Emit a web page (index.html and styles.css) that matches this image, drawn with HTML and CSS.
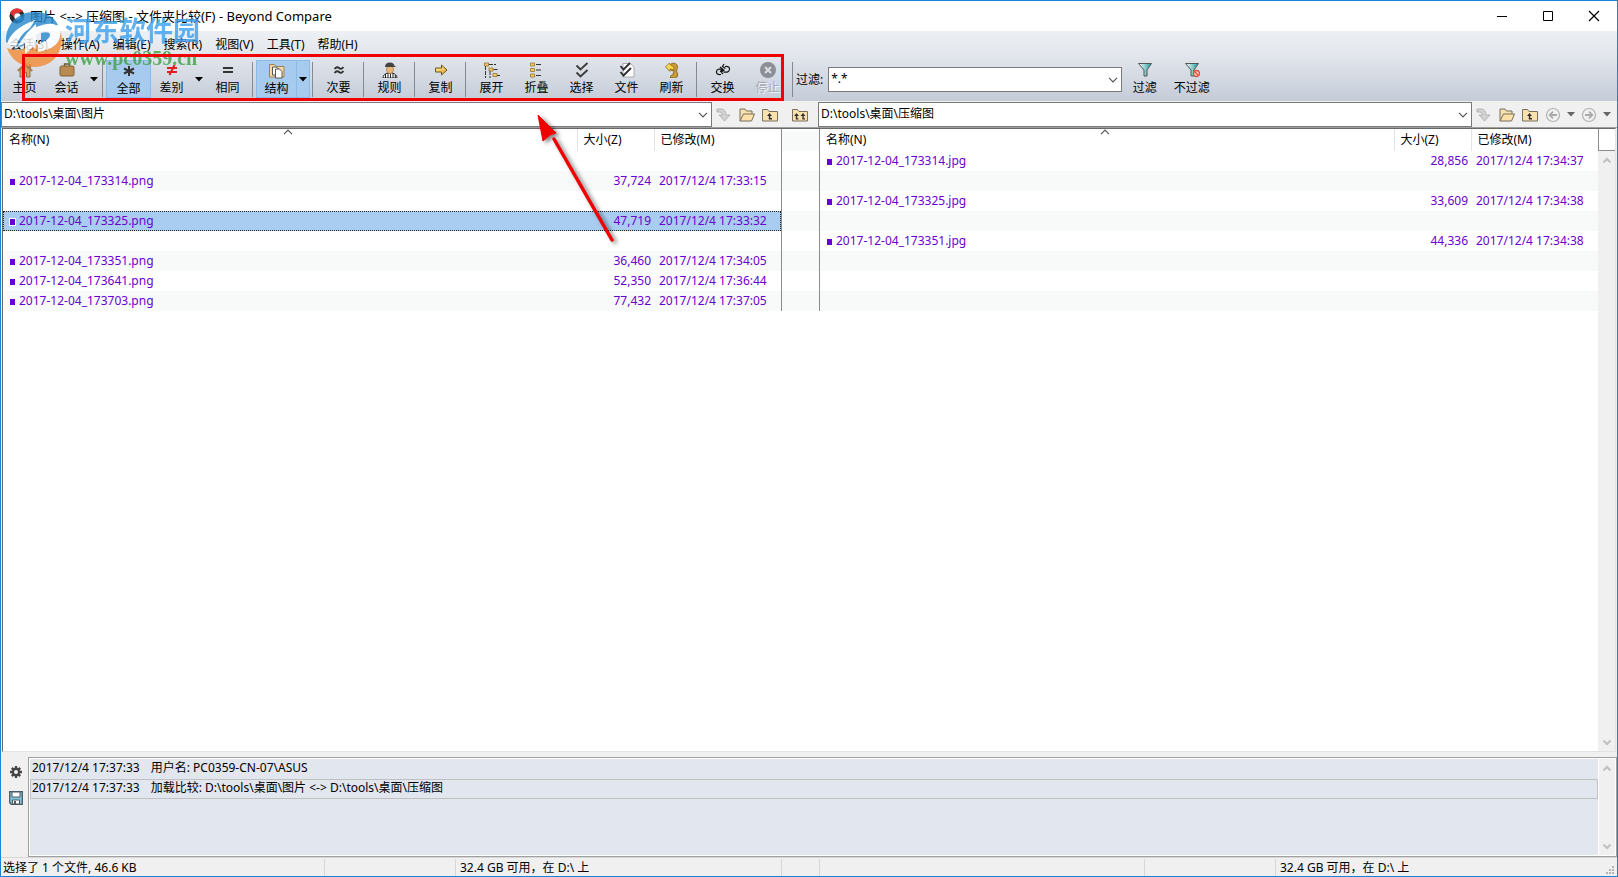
FILE: index.html
```
<!DOCTYPE html>
<html lang="zh-CN">
<head>
<meta charset="utf-8">
<title>图片 &lt;--&gt; 压缩图 - 文件夹比较(F) - Beyond Compare</title>
<link rel="stylesheet" href="styles.css">
</head>
<body>
<svg class="defs" aria-hidden="true">
  <defs>
    <linearGradient id="gold" x1="0" y1="0" x2="1" y2="1"><stop offset="0" stop-color="#fff3a0"/><stop offset="1" stop-color="#e8a020"/></linearGradient>
    <linearGradient id="teal" x1="0" y1="0" x2="1" y2="0"><stop offset="0" stop-color="#fff"/><stop offset="1" stop-color="#1c9c9c"/></linearGradient>
    <symbol id="caret" viewBox="0 0 8 5"><path d="M0 0h8L4 4.500z"/></symbol>
    <symbol id="chev" viewBox="0 0 10 6"><path d="M1 .8l4 4 4-4" fill="none" stroke="#555" stroke-width="1.200"/></symbol>
    <symbol id="sbup" viewBox="0 0 10 6"><path d="M1.500 5.500L5 2l3.500 3.500" fill="none" stroke="#bfbfbf" stroke-width="2"/></symbol>
    <symbol id="sbdown" viewBox="0 0 10 6"><path d="M1.500 .5L5 4 8.500 .5" fill="none" stroke="#bfbfbf" stroke-width="2"/></symbol>
    <symbol id="goto" viewBox="0 0 16 16"><path d="M1 2h4q5 0 5 6h4l-5.500 6L3 8h3.500q0-3-2.500-3H1z" fill="#d2d2d2" stroke="#b4b4b4"/></symbol>
    <symbol id="open" viewBox="0 0 16 16"><path d="M1 14V2h5l1.500 2H13v3" fill="#f7dfae" stroke="#77705f"/><path d="M1 14L4.500 7H15.500L12.500 14z" fill="#fbe0a8" stroke="#77705f"/></symbol>
    <symbol id="up" viewBox="0 0 16 16"><path d="M.5 14V2.500h5l1.500 2h8.500V14z" fill="#fae1ad" stroke="#77705f"/><path d="M7.500 6l2.500 3H8.300v2H10v1.400H6.800V9H5z" fill="#333"/></symbol>
    <symbol id="upup" viewBox="0 0 16 16"><path d="M.5 14V2.500h5l1.500 2h8.500V14z" fill="#fae1ad" stroke="#77705f"/><path d="M4.500 6L7 9H5.200v2.200h1.300v1.200H3.800V9H2zM11 6l2.500 3h-1.800v2.200H13v1.200h-2.700V9H8.500z" fill="#333"/></symbol>
    <symbol id="back" viewBox="0 0 16 16"><circle cx="8" cy="8" r="6.500" fill="#f1f1f1" stroke="#b2b2b2" stroke-width="1.200"/><path d="M12 8H5M8 4.700L4.700 8 8 11.300" fill="none" stroke="#aaa" stroke-width="1.800"/></symbol>
    <symbol id="fwd" viewBox="0 0 16 16"><circle cx="8" cy="8" r="6.500" fill="#f1f1f1" stroke="#b2b2b2" stroke-width="1.200"/><path d="M4 8h7M8 4.700L11.300 8 8 11.300" fill="none" stroke="#aaa" stroke-width="1.800"/></symbol>
    <symbol id="funnel" viewBox="0 0 16 16"><path d="M1.500 1.500h13L10 8v6H7V8z" fill="url(#teal)" stroke="#555"/></symbol>
  </defs>
</svg>

<div class="window">
  <header class="titlebar">
    <svg class="app-icon" viewBox="0 0 16 16" aria-hidden="true"><circle cx="8" cy="8" r="7.500" fill="#2b2b2b"/><path d="M1 5a8 8 0 0 1 13-2l-4 2a5 5 0 0 0-5 4z" fill="#e23434"/><circle cx="8.500" cy="8.500" r="3.200" fill="#fff"/><path d="M15 8a7 7 0 0 1-6 7l1-4z" fill="#2b74b8"/></svg>
    <h1 class="title">图片 &lt;--&gt; 压缩图 - 文件夹比较(F) - Beyond Compare</h1>
    <div class="win-controls">
      <button aria-label="最小化"><svg viewBox="0 0 12 12"><path d="M1 6.500h10" stroke="#000"/></svg></button>
      <button aria-label="最大化"><svg viewBox="0 0 12 12"><path d="M1.500 1.500h9v9h-9z" fill="none" stroke="#000"/></svg></button>
      <button aria-label="关闭"><svg viewBox="0 0 12 12"><path d="M1 1l10 10M11 1L1 11" stroke="#000" stroke-width="1.200"/></svg></button>
    </div>
  </header>

  <div class="command-area">
    <nav class="menu">
      <button>会话(S)</button><button>操作(A)</button><button>编辑(E)</button><button>搜索(R)</button><button>视图(V)</button><button>工具(T)</button><button>帮助(H)</button>
    </nav>
    <div class="toolbar">
      <button class="tool home"><svg viewBox="0 0 16 16"><path d="M12 2h2v5h-2z" fill="#8a7048"/><path d="M3 8v7h3.500v-4.500h3V15H13V8L8 3.500z" fill="#d0a566" stroke="#8e7146"/><path d="M.8 9L8 2l7.200 7" fill="none" stroke="#a5824d" stroke-width="2"/></svg>主页</button>
      <button class="tool split"><svg viewBox="0 0 16 16"><path d="M5.500 4V2h5v2" fill="none" stroke="#6b5433" stroke-width="1.400"/><rect x="1" y="4" width="14" height="10" rx="1.500" fill="#b98b50" stroke="#7d6038"/></svg>会话</button>
      <button class="drop" aria-label="会话选项"><svg><use href="#caret"/></svg></button>
      <span class="sep"></span>
      <button class="tool on"><svg viewBox="0 0 16 16"><path d="M8 3v10M3 5.500l10 5M13 5.500l-10 5" stroke="#333" stroke-width="2"/></svg>全部</button>
      <button class="tool split"><svg viewBox="0 0 16 16"><path d="M3 6h10M3 10h10M10.500 3l-5 10" stroke="#e02020" stroke-width="2"/></svg>差别</button>
      <button class="drop" aria-label="差别选项"><svg><use href="#caret"/></svg></button>
      <button class="tool"><svg viewBox="0 0 16 16"><path d="M3 6h10M3 10h10" stroke="#333" stroke-width="2"/></svg>相同</button>
      <span class="sep"></span>
      <button class="tool split on"><svg viewBox="0 0 16 16"><path d="M.5 14V1.500h5L7 3.500h8V14z" fill="#f3d9a3" stroke="#9b8355"/><path d="M3.500 4h4l2 2v6h-6z" fill="#fff" stroke="#555"/><path d="M6.500 6h4l2.500 2.500V15H6.500z" fill="#fff" stroke="#555"/></svg>结构</button>
      <button class="drop on" aria-label="结构选项"><svg><use href="#caret"/></svg></button>
      <span class="sep"></span>
      <button class="tool"><svg viewBox="0 0 16 16"><path d="M3.500 7q2.500-3 4.500-1t4.500-1M3.500 11q2.500-3 4.500-1t4.500-1" fill="none" stroke="#333" stroke-width="1.900"/></svg>次要</button>
      <span class="sep"></span>
      <button class="tool"><svg viewBox="0 0 16 16"><path d="M1 16q0-4 5-5h4q5 1 5 5z" fill="#fff" stroke="#333"/><path d="M3.500 12v4M6 11v5M8.500 12v4M11 11v5M13.300 13v3" stroke="#222"/><ellipse cx="8" cy="7.500" rx="3.500" ry="4" fill="#eab676" stroke="#9b6838" stroke-width=".6"/><path d="M3 5q0-4.500 5-4.500 4 0 4.500 3.500l2 1z" fill="#444"/></svg>规则</button>
      <span class="sep"></span>
      <button class="tool"><svg viewBox="0 0 16 16"><path d="M2.500 6h6V3l5.500 5-5.500 5v-3h-6z" fill="url(#gold)" stroke="#6e5520"/></svg>复制</button>
      <span class="sep"></span>
      <button class="tool"><svg viewBox="0 0 16 16"><path d="M1.500 4v12M6 9v7M5 2.500h7M9.500 7.500H14M13 13.500h3" fill="none" stroke="#333" stroke-dasharray="4 1"/><path d="M.5 1h4v3h-4zM5 6h4v3H5zM9 11.500h4v3H9z" fill="#f5cb62" stroke="#92712a" stroke-width=".8"/></svg>展开</button>
      <button class="tool"><svg viewBox="0 0 16 16"><path d="M7 2.500h5M7 8h5M7 13.500h5" stroke="#333"/><path d="M1.500 1h4v3h-4zM1.500 6.500h4v3h-4zM1.500 12h4v3h-4z" fill="#f5cb62" stroke="#92712a" stroke-width=".8"/></svg>折叠</button>
      <button class="tool"><svg viewBox="0 0 16 16"><path d="M2.500 3.500l4 4 7-6.500M2.500 10.500l4 4L13.500 8" fill="none" stroke="#3c3c3c" stroke-width="1.900"/></svg>选择</button>
      <button class="tool"><svg viewBox="0 0 16 16"><path d="M4 1.500h7l4 3.500v10H4z" fill="#fff" stroke="#aaa"/><path d="M1.500 4l3 3.500L11 1M1.500 10l3 3.500L12 6" fill="none" stroke="#333" stroke-width="1.900"/></svg>文件</button>
      <button class="tool"><svg viewBox="0 0 16 16"><path d="M5 5l2.500-3.500Q13 0 13.500 5l-1 5 1 1v3.500L11 16H6.500v-2L9 12.500 10 9 7.500 8.500z" fill="#c99b3a" stroke="#7d5b18" stroke-width=".8"/><path d="M1.500 5L5.500 1l1 2q4 1 4 5L6 7v2.500z" fill="#fbd850" stroke="#8a6518" stroke-width=".8"/></svg>刷新</button>
      <span class="sep"></span>
      <button class="tool"><svg viewBox="0 0 16 16"><path d="M6 12.500Q1 13 1.500 9.500T7.500 7.500M5 9.500l3-2-3-2.500M10 4.500Q15 4 14.500 7.500T8.500 10M8 12l-1.800-2 3.300-2M9 2L7.500 4.500l3 2" fill="none" stroke="#111" stroke-width="1.200"/></svg>交换</button>
      <button class="tool" disabled><svg viewBox="0 0 16 16"><circle cx="8" cy="8" r="8" fill="#8c9096"/><path d="M5 5l6 6M11 5l-6 6" stroke="#d9dde3" stroke-width="2"/></svg>停止</button>
      <span class="sep"></span>
      <label class="filter-label" for="mask">过滤:</label>
      <div class="combo filter-combo"><select id="mask"><option>*.*</option></select><svg class="chev"><use href="#chev"/></svg></div>
      <button class="tool"><svg><use href="#funnel"/></svg>过滤</button>
      <button class="tool wide"><svg viewBox="0 0 16 16"><use href="#funnel" width="16" height="16"/><circle cx="12.500" cy="11.500" r="3" fill="#f5d8d2" stroke="#d9503a" stroke-width="1.300"/><path d="M10.500 9.500l4 4" stroke="#d9503a" stroke-width="1.300"/></svg>不过滤</button>
    </div>
  </div>

  <div class="paths">
    <div class="path-group">
      <div class="combo"><select aria-label="左侧文件夹"><option>D:\tools\桌面\图片</option></select><svg class="chev"><use href="#chev"/></svg></div>
      <div class="path-tools">
        <button aria-label="转到" disabled><svg><use href="#goto"/></svg></button>
        <button aria-label="浏览"><svg><use href="#open"/></svg></button>
        <button aria-label="上一级"><svg><use href="#up"/></svg></button>
        <button class="both" aria-label="两侧上一级"><svg><use href="#upup"/></svg></button>
      </div>
    </div>
    <div class="path-group">
      <div class="combo"><select aria-label="右侧文件夹"><option>D:\tools\桌面\压缩图</option></select><svg class="chev"><use href="#chev"/></svg></div>
      <div class="path-tools">
        <button aria-label="转到" disabled><svg><use href="#goto"/></svg></button>
        <button aria-label="浏览"><svg><use href="#open"/></svg></button>
        <button aria-label="上一级"><svg><use href="#up"/></svg></button>
        <button aria-label="后退" disabled><svg><use href="#back"/></svg></button>
        <button class="tiny" aria-label="后退历史"><svg><use href="#caret"/></svg></button>
        <button aria-label="前进" disabled><svg><use href="#fwd"/></svg></button>
        <button class="tiny" aria-label="前进历史"><svg><use href="#caret"/></svg></button>
      </div>
    </div>
  </div>

  <main class="compare">
    <section class="pane">
      <svg class="sort"><use href="#chev"/></svg>
      <table class="files">
        <thead><tr><th class="name">名称(N)</th><th class="size">大小(Z)</th><th class="date">已修改(M)</th></tr></thead>
        <tbody>
          <tr><td></td><td></td><td></td></tr>
          <tr><td><i class="mark"></i>2017-12-04_173314.png</td><td>37,724</td><td>2017/12/4 17:33:15</td></tr>
          <tr><td></td><td></td><td></td></tr>
          <tr class="selected"><td><i class="mark"></i>2017-12-04_173325.png</td><td>47,719</td><td>2017/12/4 17:33:32</td></tr>
          <tr><td></td><td></td><td></td></tr>
          <tr><td><i class="mark"></i>2017-12-04_173351.png</td><td>36,460</td><td>2017/12/4 17:34:05</td></tr>
          <tr><td><i class="mark"></i>2017-12-04_173641.png</td><td>52,350</td><td>2017/12/4 17:36:44</td></tr>
          <tr><td><i class="mark"></i>2017-12-04_173703.png</td><td>77,432</td><td>2017/12/4 17:37:05</td></tr>
        </tbody>
      </table>
    </section>
    <div class="gutter"></div>
    <section class="pane">
      <svg class="sort"><use href="#chev"/></svg>
      <table class="files">
        <thead><tr><th class="name">名称(N)</th><th class="size">大小(Z)</th><th class="date">已修改(M)</th></tr></thead>
        <tbody>
          <tr><td><i class="mark"></i>2017-12-04_173314.jpg</td><td>28,856</td><td>2017/12/4 17:34:37</td></tr>
          <tr><td></td><td></td><td></td></tr>
          <tr><td><i class="mark"></i>2017-12-04_173325.jpg</td><td>33,609</td><td>2017/12/4 17:34:38</td></tr>
          <tr><td></td><td></td><td></td></tr>
          <tr><td><i class="mark"></i>2017-12-04_173351.jpg</td><td>44,336</td><td>2017/12/4 17:34:38</td></tr>
          <tr><td></td><td></td><td></td></tr>
          <tr><td></td><td></td><td></td></tr>
          <tr><td></td><td></td><td></td></tr>
        </tbody>
      </table>
    </section>
    <div class="side-scroll">
      <div class="corner"></div>
      <div class="scrollbar"><svg><use href="#sbup"/></svg><svg><use href="#sbdown"/></svg></div>
    </div>
  </main>

  <section class="log">
    <div class="log-tools">
      <button aria-label="选项"><svg viewBox="0 0 14 14"><path d="M7 1v12M1 7h12M2.800 2.800l8.400 8.400M11.200 2.800l-8.400 8.400" stroke="#444" stroke-width="2.400"/><circle cx="7" cy="7" r="4.200" fill="#444"/><circle cx="7" cy="7" r="2" fill="#f0f0f0"/></svg></button>
      <button aria-label="保存"><svg viewBox="0 0 14 14"><path d="M.7.700h12.600v12.600H2.200L.7 11.800z" fill="#7fc4dc" stroke="#4c5a62" stroke-width="1.300"/><path d="M3 1h8v5H3z" fill="#fff" stroke="#4c5a62"/><path d="M3.500 9h7v4h-7z" fill="#fff" stroke="#4c5a62"/><path d="M5 10h2v3H5z" fill="#4c5a62"/></svg></button>
    </div>
    <div class="log-box">
      <ul class="log-lines">
        <li><time>2017/12/4 17:37:33</time>用户名: PC0359-CN-07\ASUS</li>
        <li class="current"><time>2017/12/4 17:37:33</time>加载比较: D:\tools\桌面\图片 &lt;-&gt; D:\tools\桌面\压缩图</li>
      </ul>
      <div class="scrollbar"><svg><use href="#sbup"/></svg><svg><use href="#sbdown"/></svg></div>
    </div>
  </section>

  <footer class="status">
    <span>选择了 1 个文件, 46.6 KB</span><span></span><span>32.4 GB 可用，在 D:\ 上</span><span></span><span></span><span></span><span>32.4 GB 可用，在 D:\ 上</span>
    <svg class="grip" viewBox="0 0 9 9" aria-hidden="true"><path d="M6 0h2v2H6zM3 3h2v2H3zM6 3h2v2H6zM0 6h2v2H0zM3 6h2v2H3zM6 6h2v2H6z" fill="#b4b4b4"/></svg>
  </footer>

  <div class="watermark">
    <svg viewBox="0 0 58 58" aria-hidden="true">
      <path d="M1 32C0 14 14 1 30 2C42 2 50 8 53 15L36 18 18 36Q8 39 1 32z" fill="#2488cc"/>
      <path d="M56 22C60 44 46 57 30 57C16 57 6 50 2 38Q16 44 26 33L46 38Q54 32 56 22z" fill="#f08a35"/>
      <path d="M2 34Q6 19 30 10L25 18Q14 25 11 37zM22 23l9-9v36H20V33l-9 5zM31 17Q54 8 55 23T33 42V34Q44 32 44 24T31 25z" fill="#fff"/>
      <path d="M36 23Q45 21 45 25T36 33z" fill="#2488cc"/>
      <path d="M19 45l9-8 9 8v11H19z" fill="#f08a35"/>
    </svg>
    <div class="wm-text"><b class="wm-name">河东软件园</b><b class="wm-url">www.pc0359.cn</b></div>
  </div>
  <div class="callout"></div>
  <svg class="pointer" viewBox="0 0 90 140" aria-hidden="true"><path d="M80 130L22 29" stroke="#f00000" stroke-width="3.500" stroke-linecap="round"/><path d="M6 5L24 23 18 25 11 31z" fill="#f00000" stroke="#f00000"/></svg>
</div>
</body>
</html>
```
FILE: styles.css
```
* { box-sizing: border-box; }
body {
  margin: 0;
  font: 12px/16px "Noto Sans", "Noto Sans CJK SC", sans-serif;
  color: #000;
}
button, select {
  font: inherit;
  color: inherit;
  background: none;
  border: 0;
  padding: 0;
  margin: 0;
}
svg { display: block; }
.defs { position: absolute; width: 0; height: 0; }

.window {
  position: relative;
  display: flex;
  flex-direction: column;
  height: 100vh;
  background: #f0f0f0;
  border: 1px solid #1883d7;
  overflow: hidden;
}

/* Title bar */
.titlebar {
  display: flex;
  align-items: center;
  height: 30px;
  flex: none;
  padding-left: 8px;
  background: #fff;
}
.app-icon { width: 16px; height: 16px; }
.title { flex: 1; margin: 0 0 0 5px; font-size: 13px; font-weight: 400; }
.win-controls { display: flex; }
.win-controls button {
  display: grid;
  place-items: center;
  width: 46px;
  height: 30px;
}
.win-controls svg { width: 12px; height: 12px; }

/* Menu and toolbar */
.command-area {
  flex: none;
  background: linear-gradient(#edf0f3, #e2e6ec 35%, #c5ccd8);
}
.menu { display: flex; gap: 1px; height: 29px; padding-left: 3px; }
.menu button { padding: 0 6px 2px; }
.toolbar { display: flex; height: 41px; padding-left: 2px; }
.tool {
  display: flex;
  flex-direction: column;
  align-items: center;
  flex: none;
  width: 45px;
  height: 38px;
  padding-top: 2px;
}
.tool svg { width: 16px; height: 16px; margin-bottom: 2px; }
.tool:disabled { color: #a3a9b3; text-shadow: 1px 1px #f3f5f8; }
.home { width: 43px; }
.split { width: 41px; }
.wide { width: 49px; }
.drop {
  display: grid;
  place-items: center;
  flex: none;
  width: 13px;
  height: 38px;
}
.drop svg, .tiny svg { width: 8px; height: 5px; }
.on { background: #a6cbee; border: 1px solid #8abbe8; }
.drop.on { border-left: 0; }
.sep {
  flex: none;
  width: 1px;
  height: 35px;
  margin: 2px 3px 0 2px;
  background: #858a92;
}
.filter-label { align-self: center; margin: 0 5px 2px 0; }
.combo {
  position: relative;
  flex: 1;
  height: 25px;
  background: #fff;
  border: 1px solid #7a7a7a;
}
.combo select {
  display: block;
  appearance: none;
  width: 100%;
  height: 23px;
  padding: 0 0 2px 2px;
}
.chev {
  position: absolute;
  right: 3px;
  top: 9px;
  width: 10px;
  height: 6px;
  pointer-events: none;
}
.filter-combo { flex: 0 0 294px; margin-top: 7px; }

/* Folder paths */
.paths {
  display: grid;
  grid-template-columns: 817fr 799fr;
  flex: none;
  padding-top: 1px;
  background: #f0f0f0;
  border-bottom: 1px solid #a0a0a0;
}
.path-group { display: flex; }
.path-tools {
  display: flex;
  align-items: center;
  padding-right: 4px;
}
.path-tools button {
  display: grid;
  place-items: center;
  width: 23px;
  height: 24px;
}
.path-tools svg { width: 16px; height: 16px; }
.path-tools .both { margin: 0 3px 0 7px; }
.path-tools .tiny { width: 13px; }
.path-tools .tiny svg { width: 8px; height: 5px; fill: #666; }

/* Compared folders */
.compare {
  display: grid;
  grid-template-columns: 1fr 39px 1fr 17px;
  align-items: start;
  flex: 1;
  min-height: 0;
  margin: 0 1px;
  background: #fff;
  border: 1px solid #696969;
  border-right-color: #e3e3e3;
  border-bottom-color: #e3e3e3;
}
.pane { position: relative; }
.sort {
  position: absolute;
  left: 36%;
  top: 0;
  width: 10px;
  height: 6px;
  transform: rotate(180deg);
}
.files {
  width: 100%;
  table-layout: fixed;
  border-collapse: collapse;
}
.files th {
  height: 22px;
  padding: 0 0 0 6px;
  text-align: left;
  font-weight: 400;
}
.files th + th { border-left: 1px solid #e3e3e3; }
.size { width: 77px; }
.date { width: 127px; }
.files td {
  height: 20px;
  padding: 0 3px 0 6px;
  color: #6a00d0;
  white-space: nowrap;
}
.files td:nth-child(2) { text-align: right; }
.files td:nth-child(3) { padding: 0 0 0 5px; }
.files tbody tr:nth-child(even) { background: #f8f9f9; }
.files tbody tr.selected:nth-child(n) {
  background: #a9cdf1;
  outline: 1px dotted #222;
  outline-offset: -1px;
}
.mark {
  display: inline-block;
  width: 5px;
  height: 6px;
  margin: 0 4px 0 1px;
  background: #6a00d0;
}
.selected .mark { outline: 1px solid #fff; }
.gutter {
  height: 182px;
  border: solid #8c8c8c;
  border-width: 0 1px;
  background: linear-gradient(#fff 20px, #f8f9f9 20px) 0 22px / 100% 40px;
}
.side-scroll {
  display: flex;
  flex-direction: column;
  align-self: stretch;
}
.corner { height: 22px; border: solid #8c8c8c; border-width: 0 0 1px 1px; }
.scrollbar {
  display: flex;
  flex-direction: column;
  align-items: center;
  justify-content: space-between;
  flex: 1;
  padding: 6px 0 5px;
  background: #f0f0f0;
}
.scrollbar svg { width: 10px; height: 6px; }

/* Log */
.log { display: flex; flex: none; height: 105px; padding-top: 5px; }
.log-tools {
  display: flex;
  flex-direction: column;
  align-items: center;
  gap: 12px;
  width: 27px;
  padding: 8px 0 0 2px;
}
.log-tools svg { width: 14px; height: 14px; }
.log-box {
  display: flex;
  flex: 1;
  background: #e2e6ee;
  border: 1px solid #a0a0a0;
  box-shadow: inset 0 0 0 1px #fff;
  padding: 1px;
}
.log-lines { flex: 1; margin: 0; padding: 0; list-style: none; }
.log-lines li {
  height: 20px;
  padding: 0 1px;
  border: 1px solid transparent;
  line-height: 16px;
}
.log-lines .current { border-color: #c0c0c0; }
.log-lines time { margin-right: 11px; }
.log-box .scrollbar { flex: 0 0 17px; border-left: 1px solid #fff; }

/* Status bar */
.status {
  position: relative;
  display: grid;
  grid-template-columns: 323fr 131fr 326fr 38fr 325fr 131fr 342fr;
  flex: none;
  height: 19px;
  padding-top: 1px;
  border-top: 1px solid #d7d7d7;
  line-height: 18px;
}
.status span { padding-left: 4px; white-space: nowrap; }
.status span:first-child { padding-left: 2px; }
.status span + span { border-left: 1px solid #d7d7d7; }
.grip { position: absolute; right: 2px; bottom: 1px; width: 9px; height: 9px; }

/* Overlays */
.watermark {
  position: absolute;
  left: 4px;
  top: 9px;
  display: flex;
  pointer-events: none;
  opacity: .8;
}
.watermark svg { width: 58px; height: 58px; }
.wm-text { display: flex; flex-direction: column; margin: 4px 0 0 2px; }
.wm-name { font: 700 27px/32px "Noto Sans CJK SC", sans-serif; color: #3c9fec; }
.wm-url { font: 700 20px/24px "Liberation Serif", serif; color: #3fa045; }
.callout {
  position: absolute;
  left: 21px;
  top: 53px;
  width: 762px;
  height: 47px;
  border: 3px solid #f00000;
  pointer-events: none;
}
.pointer {
  position: absolute;
  left: 531px;
  top: 109px;
  width: 90px;
  height: 140px;
  pointer-events: none;
  filter: drop-shadow(3px 2px 2px rgba(0, 0, 0, .5));
}
```
